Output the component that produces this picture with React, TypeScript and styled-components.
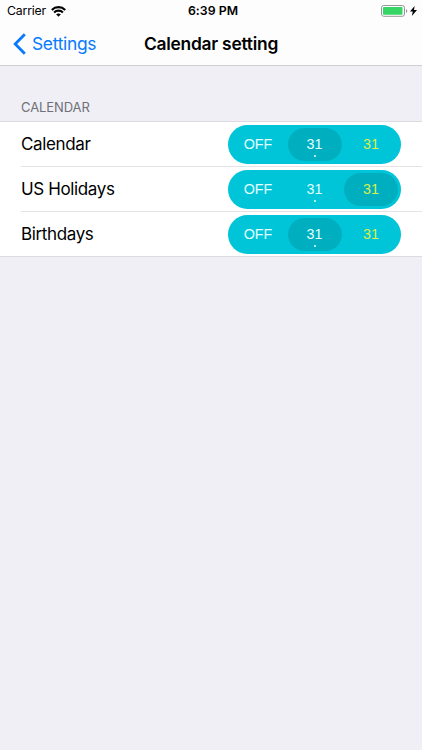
import React, { useState } from "react";
import styled, { createGlobalStyle } from "styled-components";

const GlobalStyle = createGlobalStyle`
  * { box-sizing: border-box; }
  body { margin: 0; background: #efeff5; font-family: Inter, "Liberation Sans", sans-serif; color: #000; }
  button { border: 0; padding: 0; background: none; font: inherit; cursor: pointer; }
`;

const Screen = styled.main`
  width: 100%;
  min-height: 100vh;
  background: #efeff5;
`;

const Header = styled.header`
  height: 66px;
  background: #fdfdfd;
  border-bottom: 1px solid #cfcfd4;
`;

const StatusBar = styled.div`
  height: 22px;
  padding: 0 5px 0 7px;
  display: grid;
  grid-template-columns: 1fr auto 1fr;
  align-items: center;
  font-size: 12.3px;
  line-height: 22px;
`;

const Carrier = styled.div`
  display: flex;
  align-items: center;
  gap: 5px;
  letter-spacing: -0.18px;
`;

const Clock = styled.time`
  font-weight: 600;
  letter-spacing: 0.05px;
  margin-left: 2px;
`;

const Power = styled.div`
  display: flex;
  justify-content: flex-end;
  align-items: center;
  gap: 2px;
`;

const NavBar = styled.nav`
  height: 43px;
  display: grid;
  grid-template-columns: 1fr auto 1fr;
  align-items: center;
  padding: 0 13px;
`;

const BackButton = styled.button`
  display: flex;
  align-items: center;
  gap: 6px;
  color: #087aff;
  font-size: 17.4px;
  line-height: 24px;
  letter-spacing: -0.3px;
`;

const Title = styled.h1`
  margin: 0;
  font-size: 17.4px;
  font-weight: 600;
  line-height: 24px;
  letter-spacing: -0.25px;
`;

const SectionTitle = styled.h2`
  height: 55px;
  margin: 0;
  padding: 31px 21px 0;
  color: #707075;
  font-size: 13px;
  font-weight: 400;
  line-height: 20px;
  letter-spacing: -0.1px;
`;

const List = styled.ul`
  height: 136px;
  margin: 0;
  padding: 0 0 0 21px;
  list-style: none;
  background: #fff;
  border: solid #dcdce0;
  border-width: 1px 0;
`;

const Row = styled.li`
  height: 44px;
  padding-right: 21px;
  display: flex;
  justify-content: space-between;
  align-items: center;
  & + & { height: 45px; border-top: 1px solid #e4e4e7; }
`;

const Label = styled.span`
  font-size: 17px;
  line-height: 24px;
  letter-spacing: -0.37px;
`;

const Segments = styled.div`
  width: 173px;
  height: 39px;
  padding: 3px;
  display: grid;
  grid-template-columns: 54px 54px 54px;
  justify-content: space-between;
  border-radius: 20px;
  background: #00c5d8;
`;

const Segment = styled.button<{ $selected: boolean; $accent?: boolean }>`
  position: relative;
  height: 33px;
  border-radius: 17px;
  background: ${(p) => (p.$selected ? "#00afbf" : "transparent")};
  color: ${(p) => (p.$accent ? "#dcf04b" : "#e2ffff")};
  font-family: "Liberation Sans", Arial, sans-serif;
  font-size: 14.3px;
  line-height: 33px;
  text-align: center;
`;

const Dot = styled.i`
  position: absolute;
  left: 26px;
  bottom: 4px;
  width: 2px;
  height: 2px;
  border-radius: 1px;
  background: #dfffff;
`;

const calendars = [
  { name: "Calendar", mode: 1 },
  { name: "US Holidays", mode: 2 },
  { name: "Birthdays", mode: 1 },
];

function CalendarRow({ name, mode }: (typeof calendars)[number]) {
  const [selected, setSelected] = useState(mode);
  return (
    <Row>
      <Label>{name}</Label>
      <Segments>
        <Segment $selected={selected === 0} onClick={() => setSelected(0)}>OFF</Segment>
        <Segment $selected={selected === 1} onClick={() => setSelected(1)}>31<Dot /></Segment>
        <Segment $selected={selected === 2} $accent onClick={() => setSelected(2)}>31</Segment>
      </Segments>
    </Row>
  );
}

function WifiIcon() {
  return (
    <svg width="15" height="11" viewBox="0 0 15 11" fill="none" stroke="#000" strokeWidth="2.1">
      <path d="M.8 3.9C4.5.2 10.5.2 14.2 3.9" />
      <path d="M3.1 6.4c2.4-2.4 6.4-2.4 8.8 0" />
      <path d="M5.1 8.3C6.4 7.1 8.6 7.1 9.9 8.3L7.5 10.7Z" fill="#000" stroke="none" />
    </svg>
  );
}

function BatteryIcon() {
  return (
    <svg width="27" height="12" viewBox="0 0 27 12">
      <rect x=".5" y=".5" width="23" height="10.8" rx="2.3" fill="#fff" stroke="#96969b" />
      <rect x="2" y="2" width="19.5" height="7.8" rx=".8" fill="#36d565" />
      <path d="M25 4v4c1.7-.6 1.7-3.4 0-4Z" fill="#96969b" />
    </svg>
  );
}

export default function App() {
  return (
    <>
      <GlobalStyle />
      <Screen>
        <Header>
          <StatusBar>
            <Carrier>Carrier <WifiIcon /></Carrier>
            <Clock>6:39 PM</Clock>
            <Power>
              <BatteryIcon />
              <svg width="7" height="10" viewBox="0 0 7 10"><path d="M4.6 0 0 5.6h2.8L1.8 10 7 4H4Z" /></svg>
            </Power>
          </StatusBar>
          <NavBar>
            <BackButton>
              <svg width="13" height="22" viewBox="0 0 13 22" fill="none" stroke="#087aff" strokeWidth="2.8"><path d="M11.8 1.2 2.2 11l9.6 9.8" /></svg>
              Settings
            </BackButton>
            <Title>Calendar setting</Title>
          </NavBar>
        </Header>
        <SectionTitle>CALENDAR</SectionTitle>
        <List>{calendars.map((item) => <CalendarRow key={item.name} {...item} />)}</List>
      </Screen>
    </>
  );
}
